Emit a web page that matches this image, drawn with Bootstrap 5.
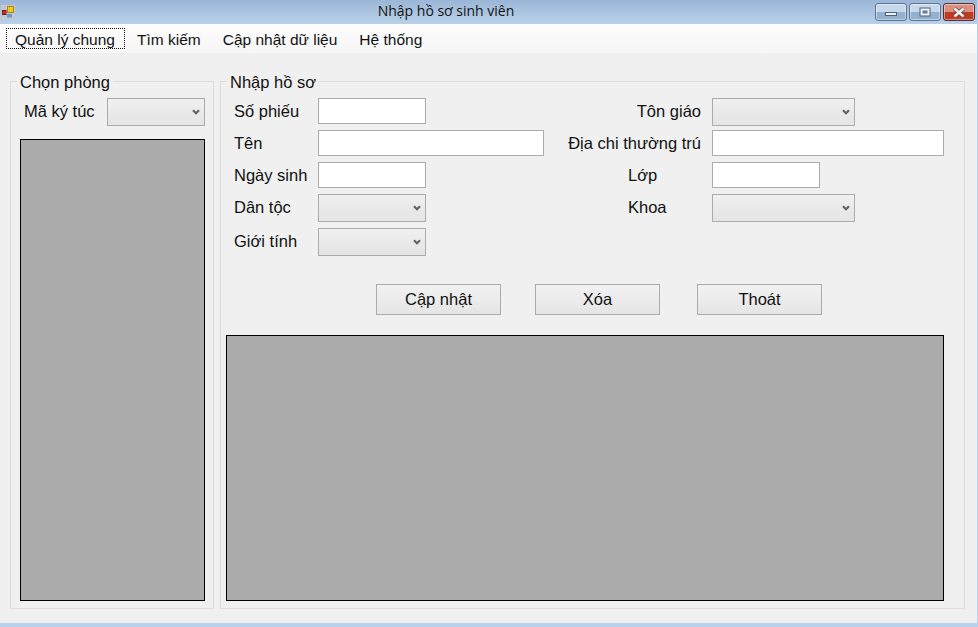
<!DOCTYPE html>
<html lang="vi">
<head>
    <meta charset="UTF-8">
    <meta name="viewport" content="width=device-width, initial-scale=1.0">
    <title>Nhập hồ sơ sinh viên</title>
    <link href="https://cdn.jsdelivr.net/npm/bootstrap@5.3.0/dist/css/bootstrap.min.css" rel="stylesheet">
    <style>
        html, body { height: 627px; overflow: hidden; }
        body {
            font-family: "Liberation Sans", Arial, sans-serif;
            font-size: 16.5px;
            color: #111;
            background: #b9d1ea;
        }
        .win-frame { width: 977px; height: 623px; background: #f0f0f0; }
        .win-title {
            height: 24px;
            background: linear-gradient(#9bb6d6, #b9d1ea);
            position: relative;
        }
        .win-title-text {
            font-family: "Open Sans", sans-serif;
            font-size: 14px;
            width: 858px;
            text-align: center;
        }
        .app-icon { margin: 4px 0 0 1px; flex: none; }
        .win-btn {
            width: 32px;
            height: 18px;
            border: 1px solid #5d7390;
            border-radius: 3px;
            background: linear-gradient(#c6d8ec 0 48%, #93b0cf 52% 100%);
            box-shadow: inset 0 0 0 1px rgba(255,255,255,.45);
        }
        .win-btn-close {
            border-color: #5b2a2a;
            background: linear-gradient(#dc8f80 0 48%, #bd3a24 52% 100%);
        }
        .win-btn-min { padding-top: 3px; }
        .win-btns { position: absolute; top: 3px; left: 875px; gap: 2px; }
        .menu-strip {
            height: 29px;
            background: linear-gradient(#fdfdfd, #f6f6f6);
            padding: 4px 0 0 6px;
            font-size: 15.5px;
        }
        .menu-entry {
            height: 21px;
            line-height: 18px;
            padding: 2px 8px 0;
            margin-right: 4px;
            border: 1px solid transparent;
            color: #111;
            text-decoration: none;
        }
        .menu-entry-active { border: 1px dotted #111; padding-right: 9px; margin-right: 3px; }
        .group-wrap { padding: 28px 0 0 10px; gap: 6px; }
        .group-box {
            border: 1px solid #dcdcdc;
            height: 528px;
            position: relative;
        }
        .group-left { width: 204px; padding: 16px 8px 0 9px; }
        .group-right { width: 745px; padding: 16px 20px 0 5px; }
        .group-title {
            position: absolute;
            top: -9px;
            left: 6px;
            padding: 0 3px;
            line-height: 18px;
            background: #f0f0f0;
        }
        .field-row { margin-bottom: 6px; }
        .field-row-tight { margin-bottom: 4px; }
        .field-label { height: 26px; line-height: 27px; white-space: nowrap; }
        .label-left { width: 92px; padding-left: 8px; }
        .label-right { width: 146px; padding-right: 11px; text-align: right; }
        .label-right-plain { text-align: left; padding-left: 62px; padding-right: 0; }
        .gap-col { width: 22px; }
        .win-input {
            height: 26px;
            border: 1px solid #ababab;
            border-radius: 0;
            background: #fff;
            padding: 0 4px;
            font-size: 16px;
        }
        .win-input:focus { box-shadow: none; border-color: #ababab; }
        .w-short { width: 108px; }
        .w-mid { width: 226px; }
        .w-long { width: 232px; }
        .win-select {
            height: 28px;
            min-height: 28px;
            width: 108px;
            border: 1px solid #ababab;
            border-radius: 0;
            padding: 0 4px;
            background-color: #e6e6e6;
            background-image: url("data:image/svg+xml,%3csvg xmlns='http://www.w3.org/2000/svg' viewBox='0 0 9 7'%3e%3cpath fill='none' stroke='%23606060' stroke-width='2.4' d='M1 1.5l3.5 3.5L8 1.5'/%3e%3c/svg%3e"), linear-gradient(#f0f0f0, #e4e4e4);
            background-repeat: no-repeat;
            background-position: right 4px center, 0 0;
            background-size: 8px 6px, 100% 100%;
        }
        .win-select:focus { box-shadow: none; border-color: #ababab; }
        .w-select-long { width: 143px; }
        .w-select-room { width: 99px; }
        .room-label { width: 87px; padding-left: 4px; line-height: 27px; margin-bottom: 0; }
        .grid-left {
            width: 185px;
            height: 462px;
            margin-top: 13px;
            background: #ababab;
            border: 1px solid #000;
        }
        .win-action {
            width: 125px;
            height: 31px;
            padding: 0;
            font-size: 16.5px;
            color: #111;
            border: 1px solid #ababab;
            border-radius: 0;
            background: linear-gradient(#f2f2f2, #e5e5e5);
        }
        .action-row { padding: 28px 0 0 150px; }
        .action-row .win-action:nth-child(2) { margin-left: 34px; }
        .action-row .win-action:nth-child(3) { margin-left: 37px; }
        .grid-main {
            width: 718px;
            height: 266px;
            margin-top: 20px;
            background: #ababab;
            border: 1px solid #000;
        }
    </style>
</head>
<body>
    <div class="win-frame">
        <div class="win-title d-flex">
            <svg class="app-icon" width="16" height="16" viewBox="0 0 16 16">
                <rect x="0" y="1" width="14" height="14" fill="#c4c8cc"/>
                <rect x="6.5" y="2.5" width="6" height="6" fill="#f5c518" stroke="#a9861a"/>
                <rect x="1.5" y="6.5" width="3.5" height="4" fill="#c9302c" stroke="#7a1a18"/>
                <rect x="6" y="10" width="5" height="3.5" fill="#5b9bd8"/>
            </svg>
            <div class="win-title-text">Nhập hồ sơ sinh viên</div>
            <div class="win-btns d-flex">
                <div class="win-btn win-btn-min d-flex align-items-center justify-content-center">
                    <svg width="12" height="6" viewBox="0 0 12 6"><rect x="0.5" y="1.5" width="11" height="3" fill="#eef2f7" stroke="#4f5f74"/></svg>
                </div>
                <div class="win-btn d-flex align-items-center justify-content-center">
                    <svg width="12" height="10" viewBox="0 0 12 10"><rect x="1" y="1" width="10" height="8" fill="#eef2f7" stroke="#4f5f74"/><rect x="3.5" y="3.5" width="5" height="3" fill="#5f7da3"/></svg>
                </div>
                <div class="win-btn win-btn-close d-flex align-items-center justify-content-center">
                    <svg width="14" height="11" viewBox="0 0 14 11"><path d="M2.5 1.5l9 8M11.5 1.5l-9 8" stroke="#5a4a4a" stroke-width="4"/><path d="M2.5 1.5l9 8M11.5 1.5l-9 8" stroke="#f1eeee" stroke-width="2.5"/></svg>
                </div>
            </div>
        </div>

        <div class="menu-strip d-flex">
            <a class="menu-entry menu-entry-active" href="#">Quản lý chung</a>
            <a class="menu-entry" href="#">Tìm kiếm</a>
            <a class="menu-entry" href="#">Cập nhật dữ liệu</a>
            <a class="menu-entry" href="#">Hệ thống</a>
        </div>

        <div class="group-wrap d-flex">
            <div class="group-box group-left">
                <div class="group-title">Chọn phòng</div>
                <div class="d-flex">
                    <label class="room-label">Mã ký túc</label>
                    <select class="form-select win-select w-select-room"></select>
                </div>
                <div class="grid-left"></div>
            </div>

            <div class="group-box group-right">
                <div class="group-title">Nhập hồ sơ</div>
                <div class="d-flex">
                    <div>
                        <div class="field-row d-flex">
                            <label class="field-label label-left">Số phiếu</label>
                            <input class="form-control win-input w-short" type="text">
                        </div>
                        <div class="field-row d-flex">
                            <label class="field-label label-left">Tên</label>
                            <input class="form-control win-input w-mid" type="text">
                        </div>
                        <div class="field-row d-flex">
                            <label class="field-label label-left">Ngày sinh</label>
                            <input class="form-control win-input w-short" type="text">
                        </div>
                        <div class="field-row d-flex">
                            <label class="field-label label-left">Dân tộc</label>
                            <select class="form-select win-select"></select>
                        </div>
                        <div class="field-row d-flex mb-0">
                            <label class="field-label label-left">Giới tính</label>
                            <select class="form-select win-select"></select>
                        </div>
                    </div>
                    <div class="gap-col"></div>
                    <div>
                        <div class="field-row field-row-tight d-flex">
                            <label class="field-label label-right">Tôn giáo</label>
                            <select class="form-select win-select w-select-long"></select>
                        </div>
                        <div class="field-row d-flex">
                            <label class="field-label label-right">Địa chi thường trú</label>
                            <input class="form-control win-input w-long" type="text">
                        </div>
                        <div class="field-row d-flex">
                            <label class="field-label label-right label-right-plain">Lớp</label>
                            <input class="form-control win-input w-short" type="text">
                        </div>
                        <div class="field-row d-flex">
                            <label class="field-label label-right label-right-plain">Khoa</label>
                            <select class="form-select win-select w-select-long"></select>
                        </div>
                    </div>
                </div>
                <div class="action-row d-flex">
                    <button class="btn win-action" type="button">Cập nhật</button>
                    <button class="btn win-action" type="button">Xóa</button>
                    <button class="btn win-action" type="button">Thoát</button>
                </div>
                <div class="grid-main"></div>
            </div>
        </div>
    </div>
    <script src="https://cdn.jsdelivr.net/npm/bootstrap@5.3.0/dist/js/bootstrap.bundle.min.js"></script>
</body>
</html>
